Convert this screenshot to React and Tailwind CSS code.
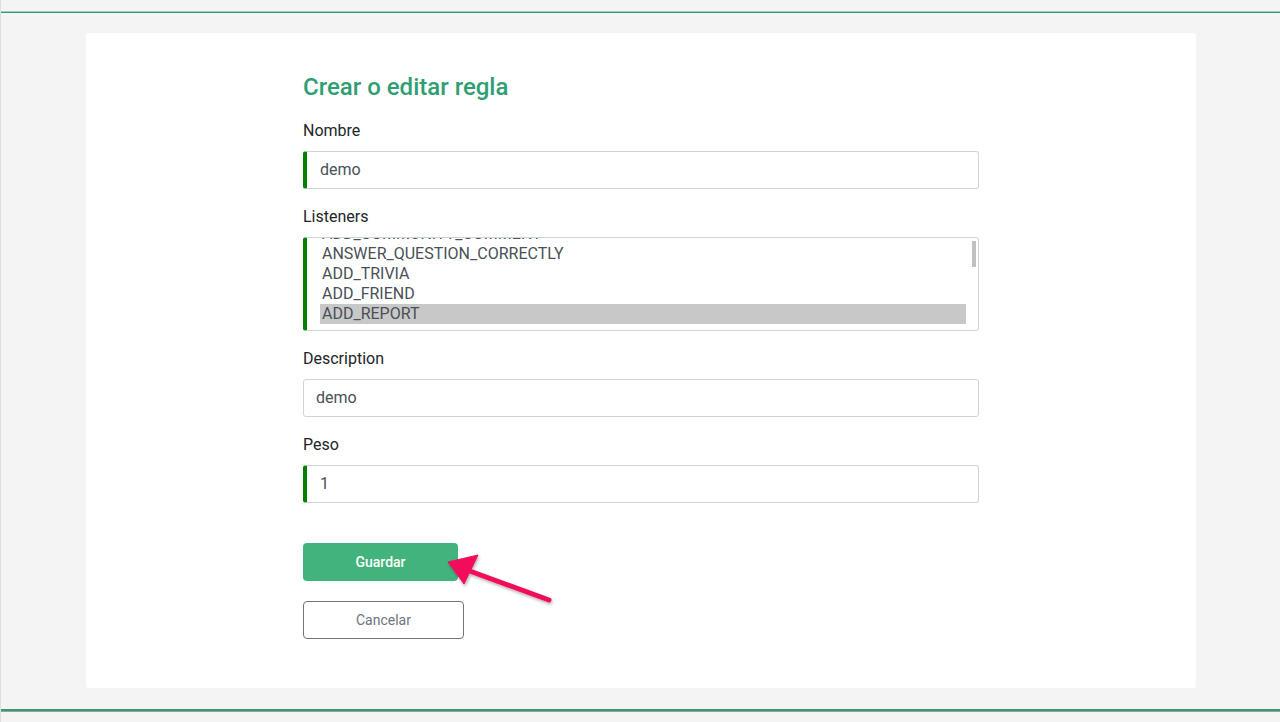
import React from "react";

const listeners = [
  "ADD_COMMUNITY_COMMENT",
  "ANSWER_QUESTION_CORRECTLY",
  "ADD_TRIVIA",
  "ADD_FRIEND",
  "ADD_REPORT",
];

function Field({ label, value, accent }) {
  return (
    <div>
      <div className="text-[16px] leading-[20px] text-[#212529]">{label}</div>
      <div
        className={`mt-[10px] h-[38px] flex items-center bg-white border border-[#ced4da] rounded-[3px] text-[16px] text-[#495057] ${
          accent ? "border-l-[4px] border-l-[#008000] pl-[13px]" : "pl-[12px]"
        }`}
      >
        {value}
      </div>
    </div>
  );
}

export default function App() {
  return (
    <div
      className="relative min-h-[722px] bg-[#f4f4f4] border-l border-[#dedede]"
      style={{ fontFamily: "Roboto, 'Liberation Sans', sans-serif" }}
    >
      <div className="h-[11px]" />
      <div className="h-[2px] border-t border-[#a8c8b8] bg-[#2e9e6e]" />

      <div className="pt-[20px] pl-[85px] pr-[84px]">
        <div className="bg-white rounded-[3px] h-[655px] pt-[40px]">
          <div className="w-[676px] ml-[217px]">
            <h1 className="text-[24px] leading-[29px] font-medium text-[#2f9e72]">
              Crear o editar regla
            </h1>

            <div className="mt-[19px]">
              <Field label="Nombre" value="demo" accent />
            </div>

            {/* Listeners */}
            <div className="mt-[18px]">
              <div className="text-[16px] leading-[20px] text-[#212529]">Listeners</div>
              <div className="relative mt-[10px] h-[94px] overflow-hidden bg-white border border-[#ced4da] border-l-[4px] border-l-[#008000] rounded-[3px]">
                <div className="-mt-[14px] pl-[13px] pr-[12px]">
                  {listeners.map((l) => (
                    <div
                      key={l}
                      className={`h-[20px] leading-[20px] pl-[2px] text-[16px] text-[#495057] ${
                        l === "ADD_REPORT" ? "bg-[#c8c8c8]" : ""
                      }`}
                    >
                      {l}
                    </div>
                  ))}
                </div>
                <div className="absolute right-[2px] top-[3px] w-[4px] h-[26px] bg-[#c1c1c1]" />
              </div>
            </div>

            <div className="mt-[18px]">
              <Field label="Description" value="demo" />
            </div>

            <div className="mt-[18px]">
              <Field label="Peso" value="1" accent />
            </div>

            <button className="mt-[40px] block w-[155px] h-[38px] rounded-[4px] bg-[#42b37d] text-white text-[14px] font-medium">
              Guardar
            </button>
            <button className="mt-[20px] block w-[161px] h-[38px] rounded-[4px] bg-white border border-[#757575] text-[#6c757d] text-[14px]">
              Cancelar
            </button>
          </div>
        </div>
      </div>

      <div className="mt-[21px] h-[3px] border-b border-[#9e9e9e] bg-[#2e9e6e]" />

      {/* arrow annotation */}
      <svg
        className="absolute left-0 top-0 pointer-events-none"
        width="1280"
        height="722"
        viewBox="0 0 1280 722"
      >
        <defs>
          <filter id="sh" x="-20%" y="-20%" width="140%" height="140%">
            <feDropShadow dx="1" dy="2" stdDeviation="1.5" floodColor="#000" floodOpacity="0.3" />
          </filter>
        </defs>
        <g filter="url(#sh)" fill="#f20d5b" stroke="#f20d5b">
          <line x1="548" y1="600" x2="466" y2="570" strokeWidth="5" strokeLinecap="round" />
          <polygon points="447,562 477,555 463,584" strokeWidth="1" strokeLinejoin="round" />
        </g>
      </svg>
    </div>
  );
}
